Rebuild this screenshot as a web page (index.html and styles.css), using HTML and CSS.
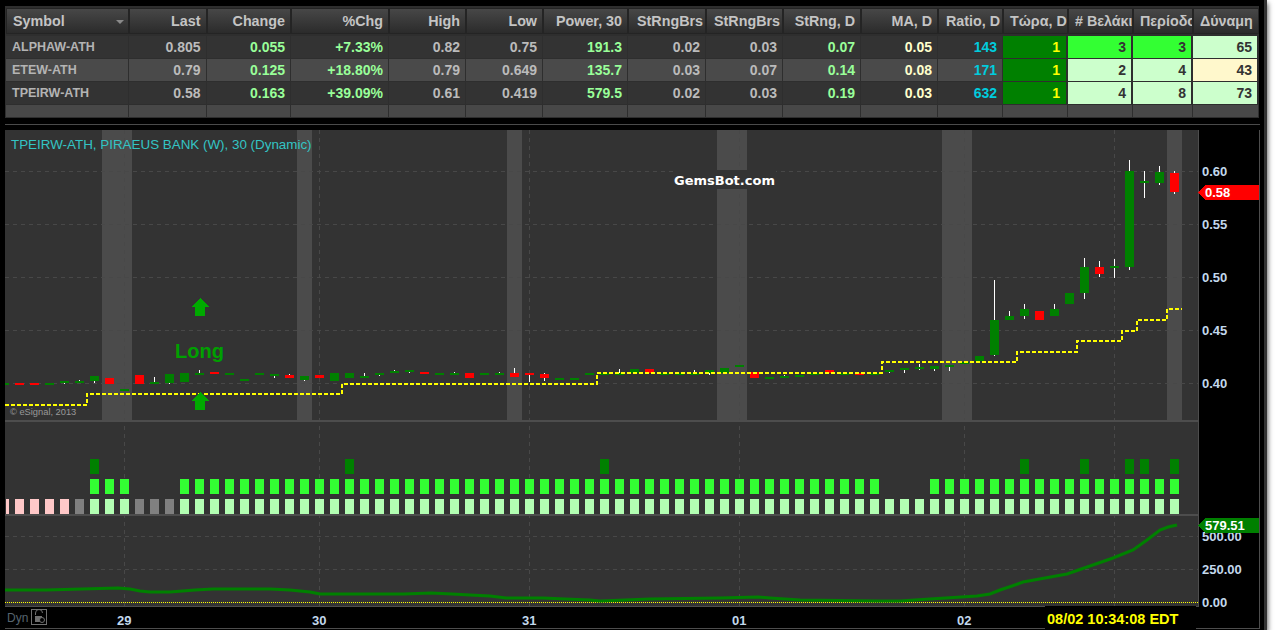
FILE: index.html
```html
<!DOCTYPE html>
<html>
<head>
    <title>Watchlist and chart</title>
    <link rel="stylesheet" href="styles.css">
</head>
<body>
    <div class="window">
        <div class="quotes">
            <div class="row head">
                <div class="cell left">Symbol<span class="sort"></span></div>
                <div class="cell">Last</div>
                <div class="cell">Change</div>
                <div class="cell">%Chg</div>
                <div class="cell">High</div>
                <div class="cell">Low</div>
                <div class="cell">Power, 30</div>
                <div class="cell tight">StRngBrs</div>
                <div class="cell tight">StRngBrs</div>
                <div class="cell">StRng, D</div>
                <div class="cell">MA, D</div>
                <div class="cell tight">Ratio, D</div>
                <div class="cell left">Τώρα, D</div>
                <div class="cell left">#&nbsp;Βελάκι</div>
                <div class="cell left">Περίοδο</div>
                <div class="cell left">Δύναμη</div>
            </div>
            <div class="row">
                <div class="cell sym">ALPHAW-ATH</div>
                <div class="cell">0.805</div>
                <div class="cell up">0.055</div>
                <div class="cell up">+7.33%</div>
                <div class="cell">0.82</div>
                <div class="cell">0.75</div>
                <div class="cell up">191.3</div>
                <div class="cell">0.02</div>
                <div class="cell">0.03</div>
                <div class="cell up">0.07</div>
                <div class="cell ma">0.05</div>
                <div class="cell ratio">143</div>
                <div class="cell now">1</div>
                <div class="cell bright">3</div>
                <div class="cell bright">3</div>
                <div class="cell pale">65</div>
            </div>
            <div class="row alt">
                <div class="cell sym">ETEW-ATH</div>
                <div class="cell">0.79</div>
                <div class="cell up">0.125</div>
                <div class="cell up">+18.80%</div>
                <div class="cell">0.79</div>
                <div class="cell">0.649</div>
                <div class="cell up">135.7</div>
                <div class="cell">0.03</div>
                <div class="cell">0.07</div>
                <div class="cell up">0.14</div>
                <div class="cell ma">0.08</div>
                <div class="cell ratio">171</div>
                <div class="cell now">1</div>
                <div class="cell pale">2</div>
                <div class="cell pale">4</div>
                <div class="cell cream">43</div>
            </div>
            <div class="row">
                <div class="cell sym">TPEIRW-ATH</div>
                <div class="cell">0.58</div>
                <div class="cell up">0.163</div>
                <div class="cell up">+39.09%</div>
                <div class="cell">0.61</div>
                <div class="cell">0.419</div>
                <div class="cell up">579.5</div>
                <div class="cell">0.02</div>
                <div class="cell">0.03</div>
                <div class="cell up">0.19</div>
                <div class="cell ma">0.03</div>
                <div class="cell ratio">632</div>
                <div class="cell now">1</div>
                <div class="cell pale">4</div>
                <div class="cell pale">8</div>
                <div class="cell pale">73</div>
            </div>
            <div class="row blank">
                <div class="cell"></div><div class="cell"></div><div class="cell"></div><div class="cell"></div>
                <div class="cell"></div><div class="cell"></div><div class="cell"></div><div class="cell"></div>
                <div class="cell"></div><div class="cell"></div><div class="cell"></div><div class="cell"></div>
                <div class="cell"></div><div class="cell"></div><div class="cell"></div><div class="cell"></div>
            </div>
        </div>

        <div class="chart-top"></div>

        <!-- viewBox keeps chart coordinates in window pixels -->
        <svg class="chart" width="1255" height="499" viewBox="5 130 1255 499">
            <rect class="plot" x="5" y="130" width="1193" height="477"></rect>
            <g id="bands"></g>
            <g id="grid"></g>
            <g id="candles"></g>
            <polyline class="stop-line" points="5,405 87,405 87,394 342,394 342,384 597,384 597,373 882,373 882,362 1017,362 1017,352 1077,352 1077,341 1122,341 1122,331 1137,331 1137,320 1167,320 1167,309 1182,309"></polyline>
            <polygon class="arrow" points="200,298 209,307 205,307 205,316 195,316 195,307 191,307"></polygon>
            <polygon class="arrow" points="200,392 209,401 205,401 205,410 195,410 195,401 191,401"></polygon>
            <g id="squares"></g>
            <rect class="divider" x="5" y="420" width="1193" height="2"></rect>
            <rect class="divider" x="5" y="514" width="1193" height="2"></rect>
            <line class="zero-line" x1="5" y1="602.5" x2="1198" y2="602.5"></line>
            <polyline class="power-line" points="5,590 46,590 82,589 118,588 130,589 140,591 150,592 170,592 195,590 213,589 270,589 290,590 310,592 320,594 404,594 431,593 452,594 470,595 490,596 506,598 543,598 565,599 590,600 600,601 625,600 650,599 720,598 758,597 770,598 800,600 880,601 900,601 930,599 977,596 990,594 1000,590 1012,586 1023,582 1045,578 1067,574 1090,566 1113,558 1133,550 1147,540 1160,530 1168,527 1177,525"></polyline>

            <text class="title" x="11" y="149">TPEIRW-ATH, PIRAEUS BANK (W), 30 (Dynamic)</text>
            <rect class="plot" x="673" y="170" width="103" height="19"></rect>
            <text class="brand" x="674" y="185">GemsBot.com</text>
            <text class="long" x="175" y="358">Long</text>
            <text class="copy" x="10" y="415">© eSignal, 2013</text>

            <rect class="axis-bg" x="1198" y="130" width="61" height="499"></rect>
            <rect class="divider" x="1198" y="130" width="1" height="477"></rect>
            <rect class="divider" x="1259" y="130" width="1" height="499"></rect>
            <text class="tick" x="1202" y="176">0.60</text>
            <text class="tick" x="1202" y="229">0.55</text>
            <text class="tick" x="1202" y="282">0.50</text>
            <text class="tick" x="1202" y="335">0.45</text>
            <text class="tick" x="1202" y="388">0.40</text>
            <polygon class="tag-red" points="1198,192.5 1205,185 1259,185 1259,200 1205,200"></polygon>
            <text class="tag-text" x="1205" y="197">0.58</text>
            <text class="tick" x="1202" y="541">500.00</text>
            <text class="tick" x="1202" y="574">250.00</text>
            <text class="tick" x="1202" y="607">0.00</text>
            <polygon class="tag-green" points="1198,525.5 1205,518 1259,518 1259,533 1205,533"></polygon>
            <text class="tag-text" x="1205" y="530">579.51</text>

            <rect class="axis-bg" x="5" y="607" width="1193" height="21"></rect>
            <rect class="divider" x="5" y="606" width="1193" height="1"></rect>
            <rect class="divider" x="5" y="628" width="1255" height="1"></rect>
            <text class="tick" x="117" y="625">29</text>
            <text class="tick" x="312" y="625">30</text>
            <text class="tick" x="522" y="625">31</text>
            <text class="tick" x="732" y="625">01</text>
            <text class="tick" x="957" y="625">02</text>
            <text class="dyn" x="7" y="622">Dyn</text>
            <g class="lock">
                <rect x="31.5" y="609.5" width="15" height="15"></rect>
                <path d="M35.5 615v-2a3.500 3.500 0 0 1 7 0"></path>
                <rect class="lock-body" x="35" y="616" width="7" height="6"></rect>
                <circle cx="42" cy="620" r="2.500"></circle>
            </g>
            <rect class="axis-bg" x="1045" y="606" width="151" height="23"></rect>
            <text class="clock" x="1047" y="624">08/02 10:34:08 EDT</text>
        </svg>
    </div>
    <script src="chart.js"></script>
</body>
</html>
```

FILE: styles.css
```css
body {
    margin: 0;
    background: #fff;
    font-family: "Liberation Sans", Arial, sans-serif;
}
.window {
    width: 1267px;
    height: 630px;
    padding-top: 6px;
    box-sizing: border-box;
    background: #000;
    border-right: 3px solid #333;
    box-shadow: 1px 3px 5px rgba(0, 0, 0, 0.6);
    overflow: hidden;
}
.quotes {
    width: 1254px;
    height: 112px;
    margin-left: 5px;
    padding: 2px 0 0 1px;
    box-sizing: border-box;
    background: #2e2e2e;
}
.row {
    display: grid;
    grid-template-columns: 123px 77.5px 84.5px 98px 77px 77px 85px 78px 77px 78px 77px 65px 65px 65px 60px 66px;
    height: 22px;
    margin-bottom: 1px;
    background: #333;
}
.cell {
    position: relative;
    padding: 0 5px 0 6px;
    overflow: hidden;
    white-space: nowrap;
    text-align: right;
    font-size: 14px;
    font-weight: bold;
    line-height: 22px;
    color: #bbb;
    border-right: 1px solid #2e2e2e;
}
.head {
    height: 26px;
    margin-bottom: 2px;
    background: none;
}
.head .cell {
    font-size: 14.3px;
    line-height: 25px;
    color: #c4c4c4;
    background: linear-gradient(#474747, #2b2b2b);
    border: 1px solid #242424;
}
.head .left {
    text-align: left;
}
.head .tight {
    padding: 0 2px 0 0;
}
.sort {
    position: absolute;
    top: 11px;
    right: 4px;
    border-top: 4px solid #8a8a8a;
    border-left: 4px solid transparent;
    border-right: 4px solid transparent;
}
.alt {
    background: #4a4a4a;
}
.blank {
    height: 12px;
    background: #484848;
}
.sym {
    text-align: left;
    font-size: 12.5px;
    color: #b4b4b4;
}
.up {
    color: #99ff99;
}
.ma {
    color: #ffffcc;
}
.ratio {
    color: #00ccdd;
}
.now, .bright, .pale, .cream {
    color: #333;
    border-right: 2px solid #2e2e2e;
}
.now {
    padding-right: 6px;
    background: #008000;
    color: #ffff00;
}
.bright {
    background: #33ff33;
}
.pale {
    background: #ccffcc;
}
.cream {
    background: #fff8cc;
}
.chart-top {
    width: 1255px;
    height: 1px;
    margin: 6px 0 5px 5px;
    background: #4a4a4a;
}
.chart {
    display: block;
    margin-left: 5px;
    shape-rendering: crispEdges;
}
.plot {
    fill: #333;
}
.axis-bg {
    fill: #000;
}
.divider {
    fill: #4d4d4d;
}
.band {
    fill: #4b4b4b;
}
.grid-line {
    stroke: #484848;
    stroke-width: 1;
    stroke-dasharray: 4 4;
}
.wick {
    fill: #fff;
}
.up-bar {
    fill: #008000;
}
.down-bar {
    fill: #ff0000;
}
.stop-line {
    fill: none;
    stroke: #ffff00;
    stroke-width: 2;
    stroke-dasharray: 4 2;
}
.zero-line {
    stroke: #ffff00;
    stroke-width: 1;
    stroke-dasharray: 1 1;
}
.power-line {
    fill: none;
    stroke: #008000;
    stroke-width: 3;
    shape-rendering: auto;
}
.arrow {
    fill: #00aa00;
}
.sq-dark {
    fill: #008000;
}
.sq-bright {
    fill: #33ff33;
}
.sq-pale {
    fill: #b3ffb3;
}
.sq-pink {
    fill: #ffc8c8;
}
.sq-gray {
    fill: #808080;
}
.title {
    font-size: 13.4px;
    fill: #33c4c4;
}
.brand {
    font-family: "DejaVu Sans", sans-serif;
    font-size: 13px;
    font-weight: bold;
    fill: #fff;
}
.long {
    font-size: 20px;
    font-weight: bold;
    fill: #00a000;
}
.copy {
    font-size: 9.3px;
    fill: #999;
}
.tick {
    font-size: 13px;
    font-weight: bold;
    fill: #c3d8ec;
}
.tag-red {
    fill: #ff0000;
}
.tag-green {
    fill: #008000;
}
.tag-text {
    font-size: 13px;
    font-weight: bold;
    fill: #fff;
}
.dyn {
    font-size: 12px;
    fill: #56646f;
}
.lock rect, .lock path, .lock circle {
    fill: none;
    stroke: #707070;
    stroke-width: 1;
    shape-rendering: auto;
}
.lock .lock-body {
    fill: #707070;
    stroke: none;
}
.lock circle {
    fill: #000;
}
.clock {
    font-size: 14.5px;
    font-weight: bold;
    fill: #ffff00;
}
```

FILE: chart.js
```js
// [top, bottom, color, wickTop, wickBottom] in window pixels, one bar every 15px
const bars = [
    [383,385,'g'],[383,385,'r'],[383,385,'r'],[383,385,'g'],[381,383,'g',381,384],
    [381,383,'g',380,383],[376,381,'g',376,383],[378,384,'r'],[389,391,'g'],[375,384,'r'],
    [382,384,'g',377,384],[374,383,'g',374,384],[373,382,'g'],[373,375,'g',370,375],[372,374,'r'],
    [373,375,'g'],[379,381,'g'],[373,375,'g'],[374,376,'g',374,378],[375,378,'r',374,378],
    [376,380,'g',376,381],[375,378,'r'],[373,381,'g'],[373,378,'g'],[376,378,'g',373,378],
    [373,375,'g',373,376],[371,373,'g',370,373],[370,372,'g',370,373],[372,374,'r'],[373,375,'g'],
    [373,375,'g',372,375],[373,378,'r'],[373,375,'g'],[373,375,'g',372,375],[373,377,'r',368,377],
    [373,375,'r',373,382],[374,378,'r',373,381],[378,380,'g'],[378,380,'g'],[373,375,'g'],
    [373,375,'g'],[373,375,'g',369,375],[369,373,'g'],[369,373,'r'],[373,375,'g'],
    [373,375,'g'],[373,375,'g',370,375],[370,373,'g',370,375],[368,373,'g'],[365,367,'g'],
    [372,378,'r'],[377,379,'g'],[376,378,'g',375,378],[375,377,'g'],[373,375,'g'],
    [370,373,'r'],[373,375,'g'],[373,375,'r'],[373,375,'g'],[370,372,'g',370,373],
    [368,370,'g',368,373],[367,369,'g',364,370],[366,369,'g',366,371],[365,367,'g',365,371],[362,364,'g'],
    [356,361,'g'],[320,355,'g',280,356],[316,320,'g',311,320],[309,316,'g',304,319],[311,320,'r'],
    [309,316,'g',304,316],[293,304,'g'],[267,293,'g',258,299],[267,274,'r',261,277],[266,268,'g',259,278],
    [171,267,'g',160,270],[181,183,'g',171,198],[172,183,'g',166,185],[173,192,'r',171,194]
];

const ns = 'http://www.w3.org/2000/svg';

function add(groupId, tag, attrs) {
    const el = document.createElementNS(ns, tag);
    for (const key in attrs) {
        el.setAttribute(key, attrs[key]);
    }
    document.getElementById(groupId).appendChild(el);
}

function rect(groupId, cls, x, y, w, h) {
    add(groupId, 'rect', { class: cls, x: x, y: y, width: w, height: h });
}

function barLeft(n) {
    return 15 * n;
}

[[102, 30], [297, 15], [507, 15], [717, 30], [942, 30], [1167, 15]].forEach(function (b) {
    rect('bands', 'band', b[0], 130, b[1], 290);
});

[171, 224, 277, 330, 383, 536, 569].forEach(function (y) {
    add('grid', 'line', { class: 'grid-line', x1: 5, y1: y + 0.5, x2: 1202, y2: y + 0.5 });
});
[124, 319, 529, 739, 964, 1114].forEach(function (x) {
    add('grid', 'line', { class: 'grid-line', x1: x + 0.5, y1: 130, x2: x + 0.5, y2: 610 });
});

bars.forEach(function (b, n) {
    const x = barLeft(n);
    if (b.length > 3) {
        rect('candles', 'wick', x + 4, b[3], 1, b[4] - b[3]);
    }
    const left = Math.max(x, 5);
    rect('candles', b[2] === 'g' ? 'up-bar' : 'down-bar', left, b[0], x + 9 - left, b[1] - b[0]);
});

// indicator rows, bar numbers as in the candles above
const darkRow = [6, 23, 40, 68, 72, 75, 76, 78];
const pinkBars = [0, 1, 2, 3, 4];
const grayBars = [5, 9, 10, 11];

function inBrightRow(n) {
    return (n >= 6 && n <= 8) || (n >= 12 && n <= 58) || n >= 62;
}

bars.forEach(function (b, n) {
    const x = barLeft(n);
    const left = Math.max(x, 6);
    const w = x + 9 - left;
    if (darkRow.includes(n)) {
        rect('squares', 'sq-dark', left, 459, w, 15);
    }
    if (inBrightRow(n)) {
        rect('squares', 'sq-bright', left, 479, w, 15);
    }
    let cls = 'sq-pale';
    if (pinkBars.includes(n)) cls = 'sq-pink';
    if (grayBars.includes(n)) cls = 'sq-gray';
    rect('squares', cls, left, 499, w, 15);
});
```
